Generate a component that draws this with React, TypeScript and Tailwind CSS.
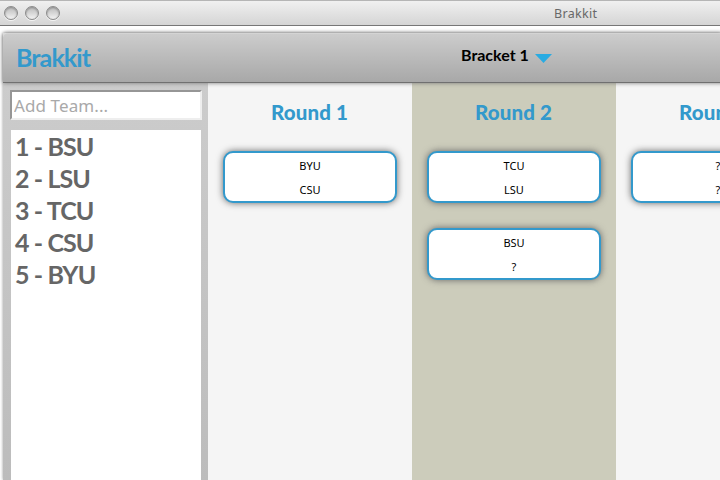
const teams = ["BSU", "LSU", "TCU", "CSU", "BYU"];

const rounds = [
  { name: "Round 1", shaded: false, matches: [["BYU", "CSU"]] },
  { name: "Round 2", shaded: true, matches: [["TCU", "LSU"], ["BSU", "?"]] },
  { name: "Round 3", shaded: false, matches: [["?", "?"]] },
];

function TitleBar() {
  return (
    <div className="flex h-[26px] shrink-0 items-center border-t border-b border-t-[#b5b5b5] border-b-[#777777] bg-linear-to-b from-[#f0f0f0] to-[#d5d5d5] pl-1">
      <div className="flex gap-[7px]">
        {[0, 1, 2].map((i) => (
          <div
            key={i}
            className="h-[14px] w-[14px] rounded-full border border-[#8b8b8b] bg-linear-to-b from-[#bcbcbc] via-[#d6d6d6] to-[#f4f4f4] shadow-[0_1px_0_#f5f5f5,inset_0_1px_2px_#8c8c8c]"
          />
        ))}
      </div>
      <span className="mt-[1px] ml-[494px] font-['Noto_Sans',sans-serif] text-[12.5px] leading-[20px] tracking-[0.3px] text-[#686868]">Brakkit</span>
    </div>
  );
}

function Header() {
  return (
    <header className="relative z-10 flex h-[50px] w-[1000px] shrink-0 items-center rounded-tl-[4px] border-t border-b border-t-[#d4d4d4] border-b-[#707070] bg-linear-to-b from-[#cccccc] to-[#a8a8a8] pl-[12px] shadow-[0_0_4px_#777777]">
      <h1 className="-mt-[2px] w-[445px] pl-px font-[Lato,sans-serif] text-[25px] leading-[30px] font-bold tracking-[-0.9px] text-[#3399cc]">Brakkit</h1>
      <span className="-mt-[6px] w-[75px] pl-px font-[Lato,sans-serif] text-[16px] leading-[20px] font-bold whitespace-nowrap text-black">Bracket 1</span>
      <svg className="mt-[1px]" width="17" height="9" viewBox="0 0 17 9">
        <path d="M0 0H17L8.5 9Z" fill="#29abe2" />
      </svg>
    </header>
  );
}

function Sidebar() {
  return (
    <aside className="flex w-[205px] shrink-0 flex-col bg-linear-to-b from-[#cccccc] to-[#bcbcbc] pt-[7px] pl-[7px]">
      <input
        placeholder="Add Team..."
        className="block h-[30px] w-[192px] shrink-0 border-2 border-t-[#969696] border-r-[#eeeeee] border-b-[#eeeeee] border-l-[#969696] bg-white pl-[2px] font-['Noto_Sans',sans-serif] text-[17px] leading-[24px] tracking-[0.1px] text-black outline-none placeholder:text-[#a9a9a9]"
      />
      <ol className="mt-[10px] ml-[1px] w-[190px] grow bg-white pl-[4px] font-[Lato,sans-serif] text-[25px] leading-[32px] font-bold tracking-[-0.9px] text-[#666666]">
        {teams.map((team, i) => (
          <li key={team}>
            {i + 1} - {team}
          </li>
        ))}
      </ol>
    </aside>
  );
}

function Match({ sides }: { sides: string[] }) {
  return (
    <div className="flex h-[52px] w-[174px] flex-col items-center rounded-[10px] border-2 border-[#3399cc] bg-white pt-[1px] font-['Noto_Sans',sans-serif] text-[11px] leading-[24px] text-black shadow-[0_0_7px_#666666]">
      {sides.map((side, i) => (
        <span key={i}>{side}</span>
      ))}
    </div>
  );
}

export default function App() {
  return (
    <div className="flex h-[480px] w-[720px] flex-col overflow-hidden bg-white">
      <TitleBar />
      <div className="mt-[7px] ml-[3px] flex min-h-0 grow flex-col shadow-[0_0_3px_#999999]">
        <Header />
        <main className="flex min-h-0 grow">
          <Sidebar />
          {rounds.map((round) => (
            <section
              key={round.name}
              className={`flex w-[204px] shrink-0 flex-col items-center pt-[14px] ${round.shaded ? "bg-[#ccccbb]" : "bg-[#f5f5f5]"}`}
            >
              <h2 className="-ml-px font-[Lato,sans-serif] text-[20.5px] leading-[30px] font-black tracking-[0.1px] text-[#3399cc]">{round.name}</h2>
              <div className="mt-[24px] flex flex-col gap-[25px]">
                {round.matches.map((sides, i) => (
                  <Match key={i} sides={sides} />
                ))}
              </div>
            </section>
          ))}
        </main>
      </div>
    </div>
  );
}
